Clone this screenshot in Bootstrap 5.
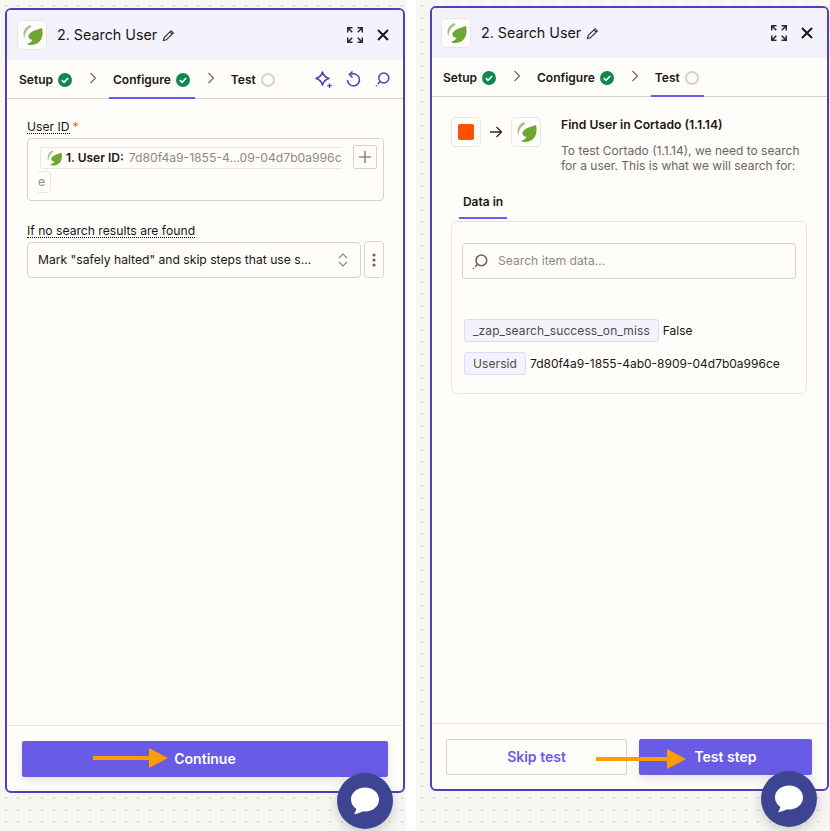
<!DOCTYPE html>
<html lang="en">
<head>
<meta charset="UTF-8">
<meta name="viewport" content="width=device-width, initial-scale=1.0">
<title>Search User</title>
<link rel="stylesheet" href="https://cdn.jsdelivr.net/npm/bootstrap@5.3.0/dist/css/bootstrap.min.css">
<style>
body { margin: 0; width: 830px; height: 831px; overflow: hidden; background: #fff; font-family: Inter, "Liberation Sans", sans-serif; color: #201515; font-size: 12.15px; }
.stage { height: 831px; }
.pane { height: 831px; background-color: #f7f6f2; background-image: radial-gradient(#dfddd4 0.8px, transparent 1px); background-size: 12px 12px; position: relative; }
.pane-a { width: 406px; padding: 8px 0 0 5px; margin-right: 10px; }
.pane-b { width: 414px; padding: 6px 0 0 14px; }
.panel { width: 400px; height: 785px; border: 2px solid #4f3fbb; border-radius: 6px; background: #fffdf9; overflow: hidden; }
.pane-b .panel { width: 399px; }
.panel-head { height: 50px; background: #f4f3fd; padding: 0 14px 0 10px; flex: none; }
.pane-b .panel-head { padding-left: 9px; }
.tile { width: 30px; height: 30px; background: #fffdf9; border: 1px solid #e9e7df; border-radius: 4px; flex: none; }
.head-title { font-size: 14.3px; margin-left: 10px; margin-right: 5px; }
.head-expand { margin-left: auto; margin-right: 14px; }
.tab-bar { height: 39px; border-bottom: 1px solid #d6d3c7; padding-left: 12px; font-size: 12px; font-weight: 600; position: relative; flex: none; }
.pane-b .tab-bar { padding-left: 11px; }
.step-tab { height: 38px; padding: 1px 5px 0 0; position: relative; }
.step-tab.on::after { content: ""; position: absolute; left: -4px; right: 0; bottom: -1px; height: 2px; background: #6a5be6; }
.step-tab .name { margin-right: 5px; }
.chev { margin: 0 16px 2px 12px; }
.dot-empty { width: 14px; height: 14px; border: 2px solid #d6d3c7; border-radius: 50%; display: block; }
.tool-set { margin-left: auto; padding-right: 13px; gap: 14px; color: #4f3fbb; }
.form-area { padding: 19px 19px 0 20px; }
.hint-label { display: inline-block; border-bottom: 1px dotted #000; line-height: 13px; margin-bottom: 4px; }
.req { color: #ff4f00; margin-left: 3px; }
.id-box { height: 63px; border: 1px solid #d6d3c7; border-radius: 4px; padding: 6px 6px 0 10px; margin-bottom: 21px; position: relative; }
.id-chip { width: 302px; height: 22px; margin: 2px 0 0 2px; border: 1px solid #e9e7df; border-right: 0; border-radius: 4px 0 0 4px; padding-left: 4px; white-space: nowrap; overflow: hidden; }
.id-chip b { font-weight: 600; margin: 0 5px 0 3px; font-size: 12px; }
.id-chip span { color: #8d8a82; }
.id-rest { width: 13px; height: 22px; margin-top: 2px; border: 1px solid #e9e7df; border-left: 0; border-radius: 0 4px 4px 0; color: #8d8a82; line-height: 20px; }
.plus-btn { position: absolute; right: 6px; top: 6px; width: 24px; height: 24px; border: 1px solid #d6d3c7; border-radius: 2px; }
.sel-box { width: 334px; height: 36px; border: 1px solid #d6d3c7; border-radius: 4px; padding: 0 12px 0 10px; }
.kebab { width: 20px; height: 37px; margin-left: 3px; margin-top: -1px; border: 1px solid #d6d3c7; border-radius: 4px; }
.panel-foot { height: 66px; border-top: 1px solid #e9e7df; margin-top: auto; padding: 15px 15px 0; flex: none; }
.pane-b .panel-foot { padding-left: 14px; }
.cta { height: 36px; padding-bottom: 2px; border-radius: 2px; background: #6a5be6; color: #fff; font-size: 14px; font-weight: 600; box-shadow: 0 4px 8px rgba(60,60,90,.12); }
.cta-go { width: 366px; }
.cta-ghost { width: 181px; height: 36px; padding-bottom: 2px; border: 1px solid #d6d3c7; border-radius: 2px; color: #6a5be6; font-size: 14px; font-weight: 600; margin-right: 12px; }
.cta-test { width: 173px; }
.intro { padding: 20px 0 0 19px; }
.orange-sq { width: 16px; height: 16px; background: #ff4f00; border-radius: 2px; display: block; }
.arrow-mid { margin: 9px 9px 0; }
.intro-text { margin-left: 20px; width: 250px; }
.intro-title { font-size: 12.15px; font-weight: 600; line-height: 16px; }
.intro-desc { font-size: 12px; color: #6b6660; line-height: 15px; margin-top: 10px; }
.tab-wrap { margin-top: 20px; line-height: 18px; }
.data-tab { display: inline-block; margin-left: 27px; width: 48px; text-align: center; height: 26px; font-size: 12px; font-weight: 600; border-bottom: 2px solid #6a5be6; white-space: nowrap; }
.data-box { width: 356px; height: 173px; margin-left: 19px; border: 1px solid #e9e7df; border-radius: 6px; padding: 21px 10px 0; margin-top: 2px; }
.search-field { height: 36px; border: 1px solid #d6d3c7; border-radius: 3px; color: #8d8a82; padding: 1px 0 0 9px; margin-bottom: 40px; }
.search-field svg { margin-right: 10px; color: #6b6660; }
.kv { margin: 0 0 10px 2px; height: 23px; font-size: 12px; }
.kv-key { height: 23px; padding: 0 8px; background: #f4f3fd; border: 1px solid #dcdafa; border-radius: 3px; color: #4e4b46; margin-right: 4px; letter-spacing: .1px; }
.orange-arrow { position: absolute; display: block; }
.chat-bubble { position: absolute; width: 56px; height: 56px; border-radius: 50%; background: #3d4592; box-shadow: 0 4px 12px rgba(0,0,0,.18); }
</style>
</head>
<body>
<svg width="0" height="0" class="position-absolute">
  <symbol id="leaf" viewBox="0 0 24 24">
    <path d="M22 5C24 13 21 22 11 22 9.300 22 7.700 21.500 7 20.700 9.600 20.300 11.800 18.600 12.600 16.800 10.500 17 8.800 15.800 8.300 13 9.500 8.500 16 7 22 5Z" fill="#6ea535"/>
    <path d="M10 2C5 4 1.800 9.500 4.500 15.500 4.800 10.500 7 6 11.500 3.800Z" fill="#a3bf8a"/>
  </symbol>
  <symbol id="okdot" viewBox="0 0 14 14">
    <circle cx="7" cy="7" r="7" fill="#0f884e"/>
    <path d="M3.800 7.200 6 9.300 10.200 5" fill="none" stroke="#fff" stroke-width="1.700"/>
  </symbol>
  <symbol id="chevron" viewBox="0 0 8 12">
    <path d="M1.500 1 6.500 6 1.500 11" fill="none" stroke="#6b6660" stroke-width="1.200"/>
  </symbol>
  <symbol id="pencil" viewBox="0 0 14 14">
    <path d="M1.500 12.500 2.300 9.300 9.800 1.800 12.200 4.200 4.700 11.700ZM8.500 3.100 10.900 5.500" fill="none" stroke="#2d2a26" stroke-width="1.200"/>
  </symbol>
  <symbol id="expand" viewBox="0 0 16 16">
    <path d="M0 5.500V0H5.500V1.500H2.600L5.800 4.700 4.700 5.800 1.500 2.600V5.500ZM10.500 0H16V5.500H14.500V2.600L11.300 5.800 10.200 4.700 13.400 1.500H10.500ZM0 10.500H1.500V13.400L4.700 10.200 5.800 11.300 2.600 14.500H5.500V16H0ZM16 10.500V16H10.500V14.500H13.400L10.200 11.300 11.300 10.200 14.500 13.400V10.500Z" fill="#2d2a26"/>
  </symbol>
  <symbol id="closex" viewBox="0 0 12 12">
    <path d="M1 1 11 11M11 1 1 11" stroke="#201515" stroke-width="2" fill="none"/>
  </symbol>
  <symbol id="sparkle" viewBox="0 0 17 17">
    <path d="M7.500 1C8.500 4.500 10.500 6.500 14 7.500 10.500 8.500 8.500 10.500 7.500 14 6.500 10.500 4.500 8.500 1 7.500 4.500 6.500 6.500 4.500 7.500 1Z" fill="none" stroke="currentColor" stroke-width="1.600" stroke-linejoin="round"/>
    <path d="M14.500 12.500V17M12.300 14.700H16.700" stroke="currentColor" stroke-width="1.300"/>
  </symbol>
  <symbol id="undo" viewBox="0 0 15 17">
    <path d="M5 3.400A6 6 0 1 1 1.500 9" fill="none" stroke="currentColor" stroke-width="1.500"/>
    <path d="M6.500 .5 3.400 3.500 6.500 6.500" fill="none" stroke="currentColor" stroke-width="1.500"/>
  </symbol>
  <symbol id="lens" viewBox="0 0 15 15">
    <circle cx="8.800" cy="6" r="5" fill="none" stroke="currentColor" stroke-width="1.500"/>
    <path d="M4.800 9.800 1 14" stroke="currentColor" stroke-width="1.500" stroke-dasharray="3 1.500 1.500"/>
  </symbol>
  <symbol id="bubble" viewBox="0 0 30 30">
    <path d="M15 1.500C7 1.500 1 6.500 1 13.500 1 17.400 3 20.700 6.200 22.800 6 24.800 5 27 4 28.200 7.500 27.800 10.500 26.700 12.800 25.300 13.500 25.400 14.300 25.500 15 25.500 23 25.500 29 20.400 29 13.500 29 6.500 23 1.500 15 1.500Z" fill="#fff"/>
  </symbol>
</svg>

<div class="stage d-flex">
  <div class="pane pane-a">
    <div class="panel d-flex flex-column">
      <div class="panel-head d-flex align-items-center">
        <div class="tile d-flex align-items-center justify-content-center"><svg width="24" height="24"><use href="#leaf"/></svg></div>
        <span class="head-title">2. Search User</span>
        <svg width="13" height="13"><use href="#pencil"/></svg>
        <svg class="head-expand" width="16" height="16"><use href="#expand"/></svg>
        <svg width="12" height="12"><use href="#closex"/></svg>
      </div>
      <div class="tab-bar d-flex align-items-center">
        <div class="step-tab d-flex align-items-center"><span class="name">Setup</span><svg width="14" height="14"><use href="#okdot"/></svg></div>
        <svg class="chev" width="8" height="12"><use href="#chevron"/></svg>
        <div class="step-tab on d-flex align-items-center"><span class="name">Configure</span><svg width="14" height="14"><use href="#okdot"/></svg></div>
        <svg class="chev" width="8" height="12"><use href="#chevron"/></svg>
        <div class="step-tab d-flex align-items-center"><span class="name">Test</span><i class="dot-empty"></i></div>
        <div class="tool-set d-flex align-items-center">
          <svg width="17" height="17"><use href="#sparkle"/></svg>
          <svg width="15" height="17"><use href="#undo"/></svg>
          <svg width="15" height="15"><use href="#lens"/></svg>
        </div>
      </div>
      <div class="form-area">
        <div><span class="hint-label">User ID</span><span class="req">*</span></div>
        <div class="id-box">
          <div class="id-chip d-flex align-items-center"><svg width="18" height="18" class="flex-shrink-0"><use href="#leaf"/></svg><b>1. User ID:</b><span>7d80f4a9-1855-4...09-04d7b0a996c</span></div>
          <div class="id-rest">e</div>
          <div class="plus-btn d-flex align-items-center justify-content-center"><svg width="12" height="12"><path d="M6 0V12M0 6H12" stroke="#8d8a82" stroke-width="1.600"/></svg></div>
        </div>
        <div><span class="hint-label">If no search results are found</span></div>
        <div class="d-flex">
          <div class="sel-box d-flex align-items-center justify-content-between"><span>Mark "safely halted" and skip steps that use s...</span><svg width="10" height="14"><path d="M1 5 5 1 9 5M1 9 5 13 9 9" fill="none" stroke="#8d8a82" stroke-width="1.200"/></svg></div>
          <div class="kebab d-flex align-items-center justify-content-center"><svg width="4" height="14"><circle cx="2" cy="2" r="1.600" fill="#6b6660"/><circle cx="2" cy="7" r="1.600" fill="#6b6660"/><circle cx="2" cy="12" r="1.600" fill="#6b6660"/></svg></div>
        </div>
      </div>
      <div class="panel-foot">
        <div class="cta cta-go d-flex align-items-center justify-content-center">Continue</div>
      </div>
    </div>
    <svg class="orange-arrow" style="left:93px;top:748px" width="76" height="20"><path d="M0 8H56V0L75 10 56 20V12H0Z" fill="#ff9d00"/></svg>
    <div class="chat-bubble d-flex align-items-center justify-content-center" style="left:337px;top:773px"><svg width="30" height="30"><use href="#bubble"/></svg></div>
  </div>

  <div class="pane pane-b">
    <div class="panel d-flex flex-column">
      <div class="panel-head d-flex align-items-center">
        <div class="tile d-flex align-items-center justify-content-center"><svg width="24" height="24"><use href="#leaf"/></svg></div>
        <span class="head-title">2. Search User</span>
        <svg width="13" height="13"><use href="#pencil"/></svg>
        <svg class="head-expand" width="16" height="16"><use href="#expand"/></svg>
        <svg width="12" height="12"><use href="#closex"/></svg>
      </div>
      <div class="tab-bar d-flex align-items-center">
        <div class="step-tab d-flex align-items-center"><span class="name">Setup</span><svg width="14" height="14"><use href="#okdot"/></svg></div>
        <svg class="chev" width="8" height="12"><use href="#chevron"/></svg>
        <div class="step-tab d-flex align-items-center"><span class="name">Configure</span><svg width="14" height="14"><use href="#okdot"/></svg></div>
        <svg class="chev" width="8" height="12"><use href="#chevron"/></svg>
        <div class="step-tab on d-flex align-items-center"><span class="name">Test</span><i class="dot-empty"></i></div>
      </div>
      <div class="intro d-flex">
        <div class="tile d-flex align-items-center justify-content-center"><i class="orange-sq"></i></div>
        <svg class="arrow-mid" width="12" height="12"><path d="M0 6H11.500M6.500 1 11.500 6 6.500 11" fill="none" stroke="#2d2a26" stroke-width="1.300"/></svg>
        <div class="tile d-flex align-items-center justify-content-center"><svg width="24" height="24"><use href="#leaf"/></svg></div>
        <div class="intro-text">
          <div class="intro-title">Find User in Cortado (1.1.14)</div>
          <div class="intro-desc">To test Cortado (1.1.14), we need to search for a user. This is what we will search for:</div>
        </div>
      </div>
      <div class="tab-wrap"><span class="data-tab">Data in</span></div>
      <div class="data-box">
        <div class="search-field d-flex align-items-center"><svg width="16" height="16"><use href="#lens"/></svg>Search item data...</div>
        <div class="kv d-flex align-items-center"><span class="kv-key d-flex align-items-center">_zap_search_success_on_miss</span><span>False</span></div>
        <div class="kv d-flex align-items-center"><span class="kv-key d-flex align-items-center">Usersid</span><span>7d80f4a9-1855-4ab0-8909-04d7b0a996ce</span></div>
      </div>
      <div class="panel-foot d-flex">
        <div class="cta-ghost d-flex align-items-center justify-content-center">Skip test</div>
        <div class="cta cta-test d-flex align-items-center justify-content-center">Test step</div>
      </div>
    </div>
    <svg class="orange-arrow" style="left:180px;top:749px" width="91" height="20"><path d="M0 8H71V0L90 10 71 20V12H0Z" fill="#ff9d00"/></svg>
    <div class="chat-bubble d-flex align-items-center justify-content-center" style="left:345px;top:771px"><svg width="30" height="30"><use href="#bubble"/></svg></div>
  </div>
</div>
<script src="https://cdn.jsdelivr.net/npm/bootstrap@5.3.0/dist/js/bootstrap.bundle.min.js"></script>
</body>
</html>
